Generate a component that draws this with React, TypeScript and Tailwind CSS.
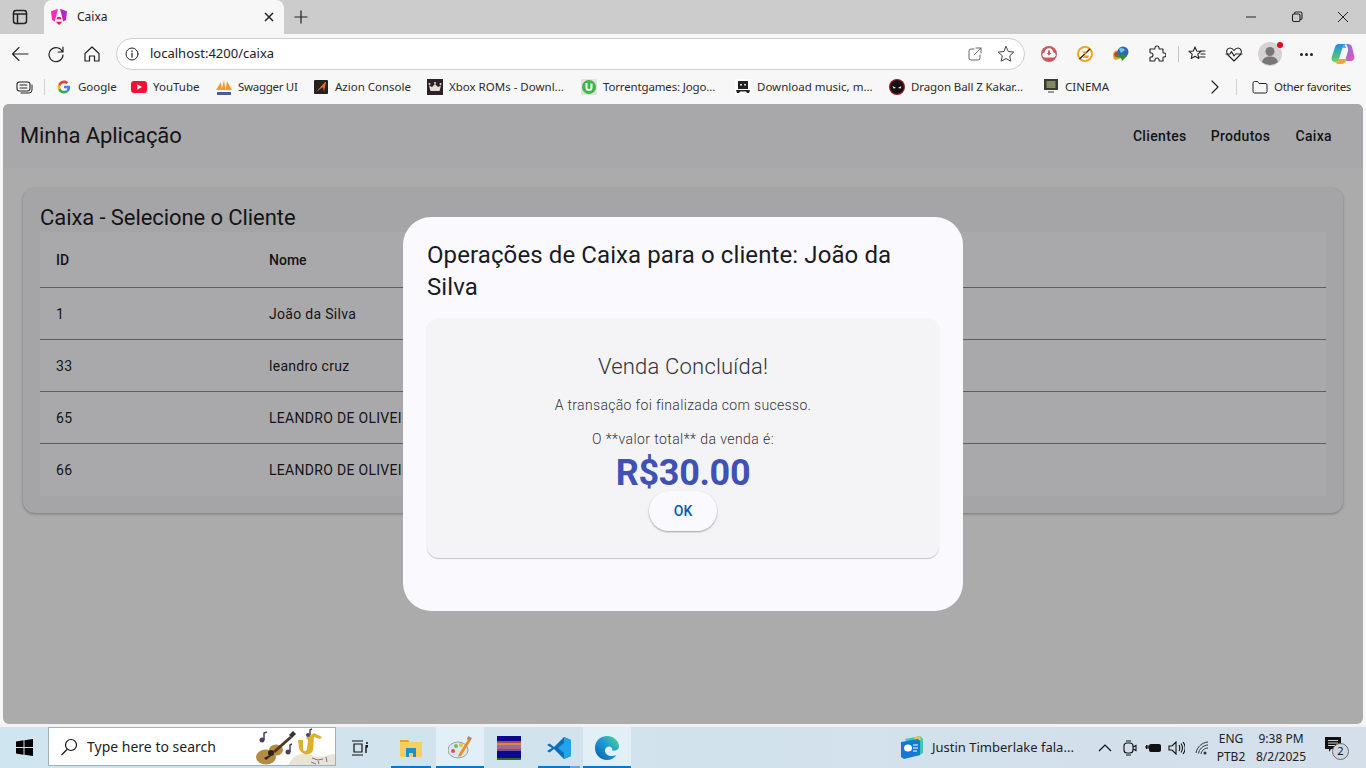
import React from "react";

const ui = "font-['Noto_Sans','Open_Sans',sans-serif]";

function Ic({ w = 20, h = 20, vb = "0 0 20 20", children }: { w?: number; h?: number; vb?: string; children: React.ReactNode }) {
  return (
    <svg width={w} height={h} viewBox={vb} fill="none" stroke="#222" strokeWidth={1.2} strokeLinecap="round" strokeLinejoin="round" className="shrink-0">
      {children}
    </svg>
  );
}

const Angular = () => (
  <svg width="18" height="18" viewBox="0 0 18 18" className="shrink-0">
    <defs>
      <linearGradient id="angr" x1="0" y1="1" x2="1" y2="0">
        <stop offset="0" stopColor="#e8128f" />
        <stop offset="1" stopColor="#8f35f0" />
      </linearGradient>
    </defs>
    <path d="M8 .8 1 3.300l1 8.700 2.800 1.600z" fill="#ff2db4" />
    <path d="M10 .8 17 3.300l-1 8.700-2.800 1.600z" fill="url(#angr)" />
    <path d="M7.300 9h3.400l.8 2.300h-5z" fill="#f0108c" />
    <path d="M5.800 13.800h6.400L9 17z" fill="#f5114f" />
  </svg>
);

const Google = () => (
  <svg width="14" height="14" viewBox="0 0 48 48" className="shrink-0">
    <path fill="#4285F4" d="M45 24.500c0-1.600-.1-3.100-.4-4.500H24v8.500h11.800c-.5 2.700-2.100 5-4.400 6.600l7.100 5.500C42.600 36.800 45 31.200 45 24.500z" />
    <path fill="#34A853" d="M24 46c5.900 0 10.900-2 14.500-5.400l-7.100-5.500c-2 1.300-4.500 2.100-7.400 2.100-5.700 0-10.500-3.800-12.200-9H4.500v5.700C8.100 41.100 15.500 46 24 46z" />
    <path fill="#FBBC05" d="M11.800 28.700c-.9-2.700-.9-5.600 0-8.300v-5.700H4.500a22 22 0 0 0 0 19.700z" />
    <path fill="#EA4335" d="M24 10.800c3.200 0 6.100 1.100 8.400 3.300l6.300-6.300C34.900 4.200 29.900 2 24 2 15.500 2 8.100 6.900 4.500 14.700l7.300 5.700c1.700-5.200 6.500-9.600 12.200-9.600z" />
  </svg>
);

const YouTube = () => (
  <svg width="16" height="12" viewBox="0 0 16 12" className="shrink-0">
    <rect width="16" height="12" rx="3" fill="#f40f33" />
    <path d="M6.300 3.200 11 6l-4.700 2.800z" fill="#fff" />
  </svg>
);

const Pma = () => (
  <svg width="16" height="16" viewBox="0 0 16 16" className="shrink-0">
    <path d="M0 11 5 3l1 8zM5.500 11 8 1l1.500 10zM9.500 11 11 2l5 9z" fill="#f39a2d" />
    <path d="M1 13h14v3H1z" fill="#4f5b93" />
  </svg>
);

const Azion = () => (
  <svg width="14" height="14" viewBox="0 0 14 14" className="shrink-0">
    <rect width="14" height="14" rx="1" fill="#222" />
    <path d="M2 12 11 2h1l-2 10-1-5z" fill="#f3652b" />
  </svg>
);

const Crown = () => (
  <svg width="16" height="16" viewBox="0 0 16 16" className="shrink-0">
    <rect width="16" height="16" fill="#2a2226" />
    <path d="M2 6.500 5 8l3-3 3 3 3-1.500L12.500 12h-9z" fill="#e9dcd5" />
    <circle cx="2.500" cy="5" r="1" fill="#e9dcd5" />
    <circle cx="8" cy="4" r="1" fill="#e9dcd5" />
    <circle cx="13.500" cy="5" r="1" fill="#e9dcd5" />
  </svg>
);

const Torrent = () => (
  <svg width="16" height="16" viewBox="0 0 16 16" className="shrink-0">
    <rect width="16" height="16" rx="1" fill="#dfe3dd" />
    <circle cx="8" cy="8" r="7" fill="#3fb44a" />
    <path d="M4.500 4v4.500a3.500 3.500 0 0 0 7 0V4.500H9.500v4a1.500 1.500 0 0 1-3 0V4z" fill="#fff" />
  </svg>
);

const Skull = () => (
  <svg width="16" height="16" viewBox="0 0 16 16" className="shrink-0">
    <rect width="16" height="16" fill="#fff" />
    <path d="M3 2h10v8H3z" fill="#222" />
    <path d="M5 5h2v1.500H5zM9 5h2v1.500H9z" fill="#ddd" />
    <path d="M1 11h14l-1 3h-2l-1-1.500H5L4 14H2z" fill="#222" />
  </svg>
);

const Deadpool = () => (
  <svg width="16" height="16" viewBox="0 0 16 16" className="shrink-0">
    <circle cx="8" cy="8" r="8" fill="#8e1a24" />
    <circle cx="8" cy="8" r="6.700" fill="#141014" />
    <path d="M3.500 7 7 9l-2.500.5zM12.500 7 9 9l2.500.5z" fill="#fff" />
  </svg>
);

const Cinema = () => (
  <svg width="16" height="16" viewBox="0 0 16 16" className="shrink-0">
    <rect width="14" height="11" x="1" fill="#3a3a30" />
    <rect width="9" height="7" x="3.500" y="2" fill="#7f8a62" />
    <path d="M5 12h6v2H5z" fill="#999" />
  </svg>
);

function Bookmark({ icon, label, className = "" }: { icon: React.ReactNode; label: string; className?: string }) {
  return (
    <div className={`flex shrink-0 items-center gap-[6px] whitespace-nowrap text-[11.5px] text-[#2b2b2b] ${className}`}>
      <span className="flex w-[16px] justify-center">{icon}</span>
      <span>{label}</span>
    </div>
  );
}

function TabBar() {
  return (
    <div className="flex h-[34px] items-end bg-[#cccccc]">
      <div className="flex h-[34px] w-[40px] items-center justify-center">
        <Ic w={16} h={16} vb="0 0 16 16">
          <rect x="1.500" y="1.500" width="13" height="13" rx="2.500" strokeWidth={1.500} />
          <path d="M1.500 5h13M5.500 5v9.500" strokeWidth={1.500} />
        </Ic>
      </div>
      <div className="ml-[4px] flex h-[34px] w-[240px] items-center rounded-t-[8px] bg-[#f7f7f7] pl-[6px] pr-[10px]">
        <Angular />
        <span className="ml-[9px] flex-1 text-[12px] text-[#222]">Caixa</span>
        <svg width="10" height="10" viewBox="0 0 10 10" stroke="#222" strokeWidth="1.500"><path d="M1 1l8 8M9 1l-8 8" /></svg>
      </div>
      <div className="ml-[9px] flex h-[34px] items-center">
        <svg width="16" height="16" viewBox="0 0 16 16" stroke="#222" strokeWidth="1.200"><path d="M8 1.500v13M1.500 8h13" /></svg>
      </div>
      <div className="ml-auto flex h-[34px] items-center text-[#222]">
        <div className="flex w-[46px] justify-center">
          <svg width="12" height="12" viewBox="0 0 12 12" stroke="#222"><path d="M1 6h10" /></svg>
        </div>
        <div className="flex w-[46px] justify-center">
          <svg width="12" height="12" viewBox="0 0 12 12" fill="none" stroke="#222" strokeWidth="1.100"><rect x="1.500" y="3" width="7.500" height="7.500" rx="1.500" /><path d="M3.500 3V2.500A1.500 1.500 0 0 1 5 1h4.500A1.500 1.500 0 0 1 11 2.500V7a1.500 1.500 0 0 1-1.500 1.500H9" /></svg>
        </div>
        <div className="flex w-[46px] justify-center">
          <svg width="12" height="12" viewBox="0 0 12 12" stroke="#222"><path d="M1 1l10 10M11 1L1 11" /></svg>
        </div>
      </div>
    </div>
  );
}

function AddressBar() {
  return (
    <div className="flex h-[40px] items-center bg-[#f7f7f7]">
      <div className="flex w-[38px] justify-center pl-[2px]">
        <Ic w={18} h={18} vb="0 0 18 18"><path d="M17 9H1.500M8 2.500 1.500 9 8 15.500" strokeWidth={1.100} /></Ic>
      </div>
      <div className="flex w-[36px] justify-center">
        <Ic w={18} h={18} vb="0 0 18 18"><path d="M15.500 7A7 7 0 1 0 16 10M16 2v5h-5" strokeWidth={1.200} /></Ic>
      </div>
      <div className="flex w-[36px] justify-center">
        <Ic w={18} h={18} vb="0 0 18 18"><path d="M2 8.500 9 2l7 6.500V16h-4.500v-5h-5v5H2z" strokeWidth={1.200} /></Ic>
      </div>
      <div className="ml-[6px] flex h-[32px] w-[909px] items-center rounded-full border border-[#cfcfcf] bg-white pl-[8px] pr-[9px]">
        <Ic w={14} h={14} vb="0 0 14 14">
          <circle cx="7" cy="7" r="6" strokeWidth={1} />
          <path d="M7 6.200v4M7 3.800v.6" strokeWidth={1.200} />
        </Ic>
        <span className={`ml-[11px] flex-1 text-[13px] text-[#222] ${ui}`}>localhost:4200/caixa</span>
        <Ic w={14} h={14} vb="0 0 14 14"><path d="M6 2H3a2 2 0 0 0-2 2v7a2 2 0 0 0 2 2h7a2 2 0 0 0 2-2V8M8 1h5v5M13 1 6.500 7.500" stroke="#666" strokeWidth={1} /></Ic>
        <span className="ml-[15px] flex">
          <Ic w={18} h={18} vb="0 0 18 18"><path d="m9 1.500 2.300 5 5.400.6-4 3.700 1.100 5.400L9 13.500l-4.800 2.700 1.100-5.400-4-3.700 5.400-.6z" stroke="#444" strokeWidth={1} /></Ic>
        </span>
      </div>
      <div className="ml-[6px] flex items-center">
        <span className="flex w-[36px] justify-center">
          <svg width="16" height="16" viewBox="0 0 16 16"><circle cx="8" cy="8" r="8" fill="#c9595e" /><path d="M4 11.500a2.500 2.500 0 0 1-.3-5 4.300 4.300 0 0 1 8.600 0 2.500 2.500 0 0 1-.3 5z" fill="#fff" /><path d="M7 4.500h2V7h1.500L8 9.800 5.500 7H7z" fill="#c9595e" /></svg>
        </span>
        <span className="flex w-[36px] justify-center">
          <svg width="16" height="16" viewBox="0 0 16 16" fill="none"><circle cx="8" cy="8" r="7" fill="#fff" stroke="#f2a31c" strokeWidth="2" /><path d="M2.500 13 13 3" stroke="#222" strokeWidth="1.400" /><path d="M4.500 5.500h5.500L8 8.500zM7 9.500h5l-1 2.500H6z" fill="#e8a02a" /></svg>
        </span>
        <span className="flex w-[36px] justify-center">
          <svg width="18" height="16" viewBox="0 0 18 16"><path d="M1 9C1 5 5 3 8 5l2 7-6 2C2 14 1 12 1 9z" fill="#e5a52c" /><path d="M2 8c1-2 3-3 5-2l1 3-5 2z" fill="#c0443c" /><circle cx="11" cy="6" r="5.500" fill="#2f66b8" /><path d="M7 3c2-2 5-1 6 1l-4 3z" fill="#7cc1e8" /><path d="M3 9l6 1V7l6 3-5 5-1-3-5-1z" fill="#2f8f2c" /></svg>
        </span>
        <span className="flex w-[36px] justify-center">
          <Ic w={18} h={18} vb="0 0 18 18"><path d="M7 3a2 2 0 0 1 4 0c0 .6 0 1 .5 1H15v3.500c0 .5.400.5 1 .5a2 2 0 0 1 0 4c-.6 0-1 0-1 .5V16h-3.500c-.5 0-.5-.4-.5-1a2 2 0 0 0-4 0c0 .6 0 1-.5 1H2v-3.500c0-.5.400-.5 1-.5a2 2 0 0 0 0-4c-.6 0-1 0-1-.5V4h4.500C7 4 7 3.600 7 3z" strokeWidth={1.100} /></Ic>
        </span>
        <span className="ml-[3px] h-[16px] w-px bg-[#c4c4c4]" />
        <span className="flex w-[36px] justify-center">
          <Ic w={18} h={18} vb="0 0 18 18"><path d="m7 2 1.700 4 4.300.4-3.200 2.800 1 4.300L7 11.200l-3.800 2.300 1-4.300L1 6.400 5.300 6zM12 6h5M13 9h4M11.500 12H17" strokeWidth={1.100} /></Ic>
        </span>
        <span className="flex w-[37px] justify-center">
          <Ic w={18} h={18} vb="0 0 18 18"><path d="M9 16 2.500 9.500C.5 7 2 3 5 3c2 0 3 1 4 2.500C10 4 11 3 13 3c3 0 4.500 4 2.500 6.500z" strokeWidth={1.100} /><path d="M1 9h4l1.500-2.500L9 11l1.500-2H17" strokeWidth={1.100} /></Ic>
        </span>
        <span className="relative flex w-[36px] justify-center">
          <svg width="24" height="24" viewBox="0 0 24 24"><circle cx="12" cy="12" r="12" fill="#d4d2d2" /><circle cx="12" cy="9.500" r="4.500" fill="#777" /><path d="M4 20c1-4 4-5.500 8-5.500s7 1.500 8 5.500a12 12 0 0 1-16 0z" fill="#777" /></svg>
          <span className="absolute right-[5px] top-[0px] h-[6px] w-[6px] rounded-full bg-[#e30613]" />
        </span>
        <span className="flex w-[36px] justify-center gap-[2px]">
          <i className="h-[3px] w-[3px] rounded-full bg-[#222]" />
          <i className="h-[3px] w-[3px] rounded-full bg-[#222]" />
          <i className="h-[3px] w-[3px] rounded-full bg-[#222]" />
        </span>
        <span className="flex w-[37px] justify-center">
          <svg width="24" height="24" viewBox="0 0 24 24">
            <defs>
              <linearGradient id="cop1" x1="0" y1="0" x2="0" y2="1"><stop offset="0" stopColor="#1c8fe8" /><stop offset="1" stopColor="#6bd35a" /></linearGradient>
              <linearGradient id="cop2" x1="0" y1="0" x2="1" y2="1"><stop offset="0" stopColor="#7a6cf5" /><stop offset="1" stopColor="#f05aa6" /></linearGradient>
            </defs>
            <path d="M8 2h7c-2 .8-3 2-3.500 4L8 17c-.7 2-2.200 3-4 3-2.500 0-4-2.400-3.300-5L4 5c.6-2 2-3 4-3z" fill="url(#cop1)" />
            <path d="M15 2h2c2 0 3.400 1 4 3l2.300 9c.7 2.500-.8 5-3.300 5h-6l3-10c.6-2-.5-5-2-7z" fill="url(#cop2)" />
            <path d="M8 22c-1.500 0-3-.5-4-2 2 0 3.200-1 4-3h8c-.8 3-3 5-6 5z" fill="#f5a43a" />
            <path d="M8 2h7c-2 .8-3 2-3.500 4H15c-.5-2-1-3-2-4z" fill="#38b6f0" />
          </svg>
        </span>
      </div>
    </div>
  );
}

function BookmarksBar() {
  return (
    <div className={`flex h-[30px] items-center bg-[#f7f7f7] pb-[4px] ${ui}`}>
      <span className="ml-[16px] flex">
        <Ic w={17} h={14} vb="0 0 17 14"><rect x="1" y="2" width="13" height="9" rx="2.500" strokeWidth={1.100} /><path d="M4 5h7M4 8h7" strokeWidth={1.100} /><path d="M16 5v5a3 3 0 0 1-3 3H5" strokeWidth={1} /></Ic>
      </span>
      <span className="ml-[11px] h-[16px] w-px bg-[#cfcfcf]" />
      <Bookmark className="ml-[11px] w-[75px]" icon={<Google />} label="Google" />
      <Bookmark className="w-[85px]" icon={<YouTube />} label="YouTube" />
      <Bookmark className="w-[97px] tracking-[-0.3px]" icon={<Pma />} label="Swagger UI" />
      <Bookmark className="w-[114px]" icon={<Azion />} label="Azion Console" />
      <Bookmark className="w-[154px]" icon={<Crown />} label="Xbox ROMs - Downl..." />
      <Bookmark className="w-[154px] tracking-[-0.15px]" icon={<Torrent />} label="Torrentgames: Jogo..." />
      <Bookmark className="w-[154px]" icon={<Skull />} label="Download music, m..." />
      <Bookmark className="w-[154px] tracking-[-0.1px]" icon={<Deadpool />} label="Dragon Ball Z Kakar..." />
      <Bookmark className="w-[70px]" icon={<Cinema />} label="CINEMA" />
      <span className="ml-auto flex w-[12px] justify-center">
        <Ic w={8} h={14} vb="0 0 8 14"><path d="m1 1 6 6-6 6" strokeWidth={1.200} /></Ic>
      </span>
      <span className="ml-[15px] h-[16px] w-px bg-[#cfcfcf]" />
      <span className="ml-[15px] flex">
        <Ic w={16} h={14} vb="0 0 16 14"><path d="M1 3a1.500 1.500 0 0 1 1.500-1.500h3L7 3.500h7A1.500 1.500 0 0 1 15 5v6.500a1.500 1.500 0 0 1-1.500 1.500h-11A1.500 1.500 0 0 1 1 11.500z" strokeWidth={1} /></Ic>
      </span>
      <span className="ml-[6px] mr-[14px] w-[78px] whitespace-nowrap text-[11.5px] tracking-[-0.3px] text-[#2b2b2b]">Other favorites</span>
    </div>
  );
}

const rows: [string, string][] = [
  ["1", "João da Silva"],
  ["33", "leandro cruz"],
  ["65", "LEANDRO DE OLIVEIRA CRUZ"],
  ["66", "LEANDRO DE OLIVEIRA"],
];

function Page() {
  return (
    <div className="relative mx-[3px] flex h-[620px] flex-col overflow-hidden rounded-[6px] bg-[#ababab] font-['Roboto',sans-serif] text-[#141416]">
      <header className="flex h-[64px] items-center justify-between bg-[#a8a8aa] pl-[17px] pr-[15px]">
        <h1 className="text-[22px] leading-[32px] tracking-[-0.1px]">Minha Aplicação</h1>
        <nav className="flex text-[14px] font-medium tracking-[0.35px]">
          <span className="pr-[24px]">Clientes</span>
          <span className="pr-[25px]">Produtos</span>
          <span className="pr-[16px]">Caixa</span>
        </nav>
      </header>
      <section className="mx-[20px] mt-[20px] h-[325px] rounded-[12px] bg-[#a5a5a8] px-[17px] pt-[16px] shadow-[0_1px_3px_rgba(0,0,0,.3)]">
        <h2 className="h-[28px] text-[22px] leading-[28px] tracking-[-0.08px]">Caixa - Selecione o Cliente</h2>
        <div className="bg-[#a9a9ac]">
          <div className="flex h-[56px] items-center border-b border-[#5f5f60] px-[16px] pt-[2px] text-[14px] font-medium">
            <span className="w-[213px]">ID</span>
            <span>Nome</span>
          </div>
          {rows.map(([id, name], i) => (
            <div key={id} className={`flex h-[52px] items-center px-[16px] text-[14px] tracking-[0.3px] ${i < 3 ? "border-b border-[#5f5f60] pt-[2px]" : "pt-[1px]"}`}>
              <span className="w-[213px]">{id}</span>
              <span>{name}</span>
            </div>
          ))}
        </div>
      </section>

      <div className="absolute left-[400px] top-[113px] flex h-[394px] w-[560px] flex-col rounded-[28px] bg-[#faf9fe] px-[24px] pt-[22px]">
        <h2 className="text-[24px] leading-[32px] tracking-[0.1px] text-[#1a1b1f]">Operações de Caixa para o cliente: João da Silva</h2>
        <div className="mt-[15px] flex h-[240px] flex-col items-center rounded-[12px] bg-[#f4f4f6] pt-[33px] shadow-[0_1px_1px_rgba(0,0,0,.22)]">
          <h3 className="text-[22px] font-light leading-[32px] tracking-[0.2px] text-[#333338]">Venda Concluída!</h3>
          <p className="mt-[12px] text-[14px] font-light leading-[20px] tracking-[0.33px] text-[#333338]">A transação foi finalizada com sucesso.</p>
          <p className="mt-[14px] text-[14px] font-light leading-[20px] tracking-[0.42px] text-[#333338]">O **valor total** da venda é:</p>
          <p className="mt-[6px] text-[36px] font-bold leading-[36px] tracking-[-0.3px] text-[#3f51b5]">R$30.00</p>
          <button className="h-[40px] w-[68px] rounded-full bg-[#faf9fe] text-[14px] font-medium tracking-[0.1px] text-[#005cbb] shadow-[0_1px_2px_rgba(0,0,0,.35)]">OK</button>
        </div>
      </div>
    </div>
  );
}

function TaskItem({ active, line, children, w }: { active?: boolean; line?: boolean; children: React.ReactNode; w: string }) {
  return (
    <div className={`relative flex h-full items-center justify-center ${w} ${active ? "bg-[#e2eff6]" : ""}`}>
      {children}
      {line && <span className="absolute inset-x-0 bottom-0 h-[2px] bg-[#0078d4]" />}
    </div>
  );
}

function Taskbar() {
  return (
    <div className={`flex h-[41px] items-center bg-gradient-to-r from-[#cfe5ef] to-[#d4dfea] text-[#111] ${ui}`}>
      <div className="flex w-[48px] justify-center">
        <svg width="17" height="17" viewBox="0 0 17 17" fill="#000"><path d="M0 2.500 7.500 1.300v6.700H0zM8.500 1.200 17 0v8H8.500zM0 9h7.500v6.700L0 14.500zM8.500 9H17v8l-8.500-1.200z" /></svg>
      </div>
      <div className="flex h-[39px] w-[288px] items-center self-start overflow-hidden border border-[#9cb0bd] bg-white pl-[11px]">
        <svg width="18" height="18" viewBox="0 0 18 18" fill="none" stroke="#111" strokeWidth="1.200"><circle cx="11" cy="7" r="5.500" /><path d="M7 11.500 1.500 17" /></svg>
        <span className="ml-[9px] text-[14px] text-[#222]">Type here to search</span>
        <svg width="79" height="38" viewBox="0 0 79 38" className="ml-auto shrink-0">
          <path d="M32 38c3-8 10-13 18-12 6 .6 8 3 12 3 6 0 12-3 17-3v12z" fill="#e9e4d6" />
          <path d="M56 30l6 2 5-1M70 29l1 5M62 33l1 3M55 34l5 2" stroke="#77738a" fill="none" />
          <ellipse cx="10" cy="29" rx="10" ry="7.500" fill="#b58a42" />
          <ellipse cx="20" cy="22" rx="7" ry="5.500" fill="#b58a42" />
          <circle cx="15" cy="25" r="3" fill="#2c2418" />
          <path d="M8 30l6-3 1 1-5 4z" fill="#2c2418" />
          <path d="M17 23 34 8l2 2-17 15z" fill="#4a3a2a" />
          <path d="M33 7l4-4 3 3-4 4z" fill="#333" />
          <path d="M42 12h5v8c0 4 3 4 4 1l1-9-2-2 8-5 8 4-2 2-6-2-1 13c-1 6-12 6-14-2z" fill="#dcb12c" />
          <circle cx="6" cy="12" r="2.500" fill="#4b4063" /><path d="M8 12V5l3-1" stroke="#4b4063" strokeWidth="1.500" fill="none" />
          <circle cx="32" cy="24" r="2.500" fill="#4b4063" /><path d="M34 24v-7l2-1" stroke="#4b4063" strokeWidth="1.500" fill="none" />
          <circle cx="52" cy="7" r="2" fill="#4b4063" /><path d="M54 7V2l2-1" stroke="#4b4063" strokeWidth="1.500" fill="none" />
        </svg>
      </div>
      <TaskItem w="w-[48px]">
        <svg width="18" height="16" viewBox="0 0 18 16" fill="none" stroke="#111" strokeWidth="1.200"><path d="M1 1h11M1 15h11M3 4h8v8H3z" /><path d="M15 3h2M15 7v6" strokeWidth="1.400" /><rect x="14.500" y="5" width="2.500" height="2.500" fill="#111" stroke="none" /></svg>
      </TaskItem>
      <div className="w-[7px]" />
      <TaskItem w="w-[40px]" line>
        <svg width="22" height="18" viewBox="0 0 22 18"><path d="M0 1h8l1.500 2H22v15H0z" fill="#f7cf5f" /><path d="M0 1h8l1.500 2H0z" fill="#e0a526" /><path d="M6 9h10v9h-3v-4H9v4H6z" fill="#1d8fd8" /></svg>
      </TaskItem>
      <div className="w-[5px]" />
      <TaskItem w="w-[48px]" active line>
        <svg width="24" height="24" viewBox="0 0 24 24"><ellipse cx="10" cy="14" rx="10" ry="8" fill="#dbe6ef" stroke="#8da2b5" /><circle cx="5" cy="15" r="2" fill="#e0524c" /><circle cx="8" cy="10" r="2" fill="#7bbf4a" /><circle cx="13" cy="9" r="2" fill="#e5c33a" /><path d="M21 2l2 2-10 16-3 1 1-3z" fill="#e88c25" /><path d="M20 0l4 2-2 3-3-2z" fill="#b08a60" /></svg>
      </TaskItem>
      <TaskItem w="w-[50px]">
        <svg width="24" height="24" viewBox="0 0 24 24"><rect width="24" height="24" fill="#0a0a8a" /><path d="M0 5h24v2H0z" fill="#b4474a" /><path d="M0 7h24v2H0z" fill="#cf8a4a" /><path d="M0 9h24v2H0z" fill="#8f6fb0" /><path d="M0 11h24v2H0z" fill="#c25b6a" /><path d="M0 13h24v2H0z" fill="#6a52b0" /><path d="M0 22h24v2H0z" fill="#2e6b2e" /></svg>
      </TaskItem>
      <div className="relative flex h-full w-[49px] items-center justify-center">
        <svg width="24" height="24" viewBox="0 0 24 24"><path d="M17 1 7 11 2.500 7.500 0 9l5 3-5 3 2.500 1.500L7 13l10 10 7-3V4z" fill="#0a6fb8" /><path d="M17 1l7 3v16l-7 3zM17 7l-6 5 6 5z" fill="#23a3ea" fillRule="evenodd" /></svg>
        <span className="absolute bottom-0 left-[4px] flex h-[2px] w-[42px]">
          <i className="w-[32px] bg-[#0078d4]" />
          <i className="w-[10px] bg-[#6aa9e0]" />
        </span>
      </div>
      <TaskItem w="w-[48px]" active line>
        <svg width="24" height="24" viewBox="0 0 24 24">
          <defs><linearGradient id="edg" x1="0" y1="1" x2="1" y2="0"><stop offset="0" stopColor="#0c59a4" /><stop offset="0.55" stopColor="#1f9bd8" /><stop offset="1" stopColor="#4fdc7c" /></linearGradient></defs>
          <path d="M12 0C5 0 0 5.400 0 12c0 6.600 5.400 12 12 12 4 0 7.500-2 9.500-5-3 1.500-7 1.500-9.500-.5-3-2.500-2.500-6 0-7.500 1.500-1 4-.5 5 1 .5.800.3 1.800 0 2.500 3 .5 7-.5 7-4C24 5 18.500 0 12 0z" fill="url(#edg)" />
        </svg>
      </TaskItem>
      <div className="ml-auto flex h-full items-center">
        <svg width="24" height="24" viewBox="0 0 24 24"><path d="M5 3 20 0l3 3v14l-5 3z" fill="#3ec7b0" /><path d="M14 1l6-1 1 4-6 1z" fill="#e0c84a" /><path d="M1 6l17-3 2 2v14L4 23l-3-2z" fill="#1478d4" /><ellipse cx="8" cy="12" rx="4" ry="3.500" fill="#fff" /><path d="M13 9h5M13 12h5M13 15h4" stroke="#fff" /></svg>
        <span className="ml-[8px] w-[143px] whitespace-nowrap text-[13px] text-[#222]">Justin Timberlake fala...</span>
        <svg width="14" height="8" viewBox="0 0 14 8" fill="none" stroke="#111" strokeWidth="1.200" className="ml-[23px]"><path d="m1 7 6-6 6 6" /></svg>
        <svg width="14" height="16" viewBox="0 0 14 16" fill="none" stroke="#111" strokeWidth="1.100" className="ml-[11px]"><rect x="1" y="3" width="9" height="10" rx="3" /><path d="M10 7l3-1.500v5L10 9M3 1h5M3 15h5" /></svg>
        <svg width="16" height="12" viewBox="0 0 16 12" className="ml-[8px]"><rect x="4.500" y="2.500" width="11" height="7" rx="1" fill="#111" stroke="#111" /><path d="M0 5h4M1.500 3v4M3 3v4" stroke="#111" /></svg>
        <svg width="17" height="14" viewBox="0 0 17 14" fill="none" stroke="#111" strokeWidth="1.100" className="ml-[7px]"><path d="M1 5v4h3l4 4V1L4 5zM11 4c1 2 1 4 0 6M13 2.500c2 3 2 6 0 9M15 1c3 4 3 8 0 12" /></svg>
        <svg width="14" height="14" viewBox="0 0 14 14" fill="none" stroke="#333" strokeWidth="1" className="ml-[10px]"><path d="M1 12C2 6 7 1.500 13 1M3.500 12.500C4 8.500 8 4 13 4M6 13c.5-3 3-6 7-6" /><circle cx="10" cy="12" r="1.500" fill="#333" stroke="none" /></svg>
        <div className="ml-[4px] flex w-[36px] flex-col items-center text-[12px] leading-[18px] text-[#222]">
          <span>ENG</span>
          <span>PTB2</span>
        </div>
        <div className="ml-[2px] flex w-[60px] flex-col items-center text-[12px] leading-[18px] text-[#222]">
          <span>9:38 PM</span>
          <span>8/2/2025</span>
        </div>
        <div className="relative ml-[14px] mr-[17px] flex h-[24px] w-[24px]">
          <svg width="16" height="16" viewBox="0 0 16 16" className="mt-[1px]"><path d="M0 0h16v12H6l-2 3v-3H0z" fill="#111" /><path d="M3 3.500h10M3 6h10M3 8.500h7" stroke="#fff" strokeWidth="0.800" /></svg>
          <span className="absolute bottom-[0px] right-0 flex h-[17px] w-[17px] items-center justify-center rounded-full border border-[#6b6b6b] bg-[#cfd7e0] text-[11px] text-[#111]">2</span>
        </div>
      </div>
    </div>
  );
}

export default function App() {
  return (
    <div className={`flex h-[768px] w-[1366px] flex-col overflow-hidden bg-[#f7f7f7] ${ui}`}>
      <TabBar />
      <AddressBar />
      <BookmarksBar />
      <Page />
      <div className="h-[3px] bg-[#f2f2f2]" />
      <Taskbar />
    </div>
  );
}
